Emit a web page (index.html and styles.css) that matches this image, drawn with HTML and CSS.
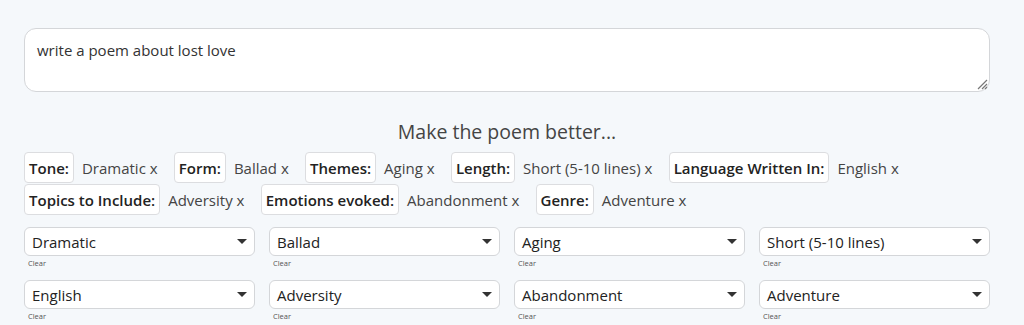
FILE: index.html
```html
<!DOCTYPE html>
<html>
<head>
<meta charset="utf-8">
<link rel="stylesheet" href="styles.css">
</head>
<body>
<div class="page">
  <div class="prompt">
    <div class="prompt-text">write a poem about lost love</div>
    <svg class="grip" width="12" height="12" viewBox="0 0 12 12"><path d="M11 2 L2 11 M11 6 L6 11 M11 9 L9 11" stroke="#777" stroke-width="1.2" fill="none"/></svg>
  </div>
  <h2 class="title">Make the poem better...</h2>
  <div class="tags">
    <div class="tag"><span class="tag-label">Tone:</span><span class="tag-value">Dramatic x</span></div>
    <div class="tag"><span class="tag-label">Form:</span><span class="tag-value">Ballad x</span></div>
    <div class="tag"><span class="tag-label">Themes:</span><span class="tag-value">Aging x</span></div>
    <div class="tag"><span class="tag-label">Length:</span><span class="tag-value">Short (5-10 lines) x</span></div>
    <div class="tag"><span class="tag-label">Language Written In:</span><span class="tag-value">English x</span></div>
    <div class="tag"><span class="tag-label">Topics to Include:</span><span class="tag-value">Adversity x</span></div>
    <div class="tag"><span class="tag-label">Emotions evoked:</span><span class="tag-value">Abandonment x</span></div>
    <div class="tag"><span class="tag-label">Genre:</span><span class="tag-value">Adventure x</span></div>
  </div>
  <div class="selects">
    <div class="field"><div class="select"><span>Dramatic</span><span class="caret"></span></div><div class="clear">Clear</div></div>
    <div class="field"><div class="select"><span>Ballad</span><span class="caret"></span></div><div class="clear">Clear</div></div>
    <div class="field"><div class="select"><span>Aging</span><span class="caret"></span></div><div class="clear">Clear</div></div>
    <div class="field"><div class="select"><span>Short (5-10 lines)</span><span class="caret"></span></div><div class="clear">Clear</div></div>
    <div class="field"><div class="select"><span>English</span><span class="caret"></span></div><div class="clear">Clear</div></div>
    <div class="field"><div class="select"><span>Adversity</span><span class="caret"></span></div><div class="clear">Clear</div></div>
    <div class="field"><div class="select"><span>Abandonment</span><span class="caret"></span></div><div class="clear">Clear</div></div>
    <div class="field"><div class="select"><span>Adventure</span><span class="caret"></span></div><div class="clear">Clear</div></div>
  </div>
</div>
</body>
</html>
```
FILE: styles.css
```css
html, body {
  margin: 0;
  padding: 0;
  background: #f5f8fb;
  font-family: "Open Sans", "Noto Sans", sans-serif;
  color: #333;
}
.page {
  width: 966px;
  margin-left: 24px;
  padding-top: 28px;
}
.prompt {
  position: relative;
  height: 64px;
  background: #fff;
  border: 1px solid #d4d6d9;
  border-radius: 12px;
  padding: 10px 12px;
  box-sizing: border-box;
  font-size: 15px;
  line-height: 22px;
  color: #333;
}
.grip {
  position: absolute;
  right: 1px;
  bottom: 1px;
}
.title {
  margin: 26px 0 0;
  text-align: center;
  font-size: 19.5px;
  font-weight: 400;
  color: #444;
  line-height: 28px;
}
.tags {
  display: flex;
  flex-wrap: wrap;
  row-gap: 1px;
  margin-top: 6px;
}
.tag {
  display: flex;
  align-items: center;
  margin-right: 16.3px;
}
.tag-label {
  display: inline-block;
  background: #fff;
  border: 1px solid #dcdde0;
  border-radius: 4px;
  padding: 0 4px;
  height: 31px;
  line-height: 30px;
  box-sizing: border-box;
  font-weight: 600;
  font-size: 15px;
  color: #222;
}
.tag-value {
  margin-left: 8px;
  font-size: 15px;
  color: #444;
}
.selects {
  display: grid;
  grid-template-columns: repeat(4, 1fr);
  column-gap: 14px;
  row-gap: 0;
  margin-top: 12px;
}
.select {
  height: 29px;
  background: #fff;
  border: 1px solid #d4d6d9;
  border-radius: 6px;
  box-sizing: border-box;
  display: flex;
  align-items: center;
  justify-content: space-between;
  padding: 0 7px 0 7px;
  font-size: 15px;
  color: #222;
}
.caret {
  width: 0;
  height: 0;
  border-left: 5px solid transparent;
  border-right: 5px solid transparent;
  border-top: 5px solid #333;
}
.clear {
  font-size: 7.5px;
  color: #555;
  padding-left: 4px;
  line-height: 14px;
  height: 24px;
}
```
